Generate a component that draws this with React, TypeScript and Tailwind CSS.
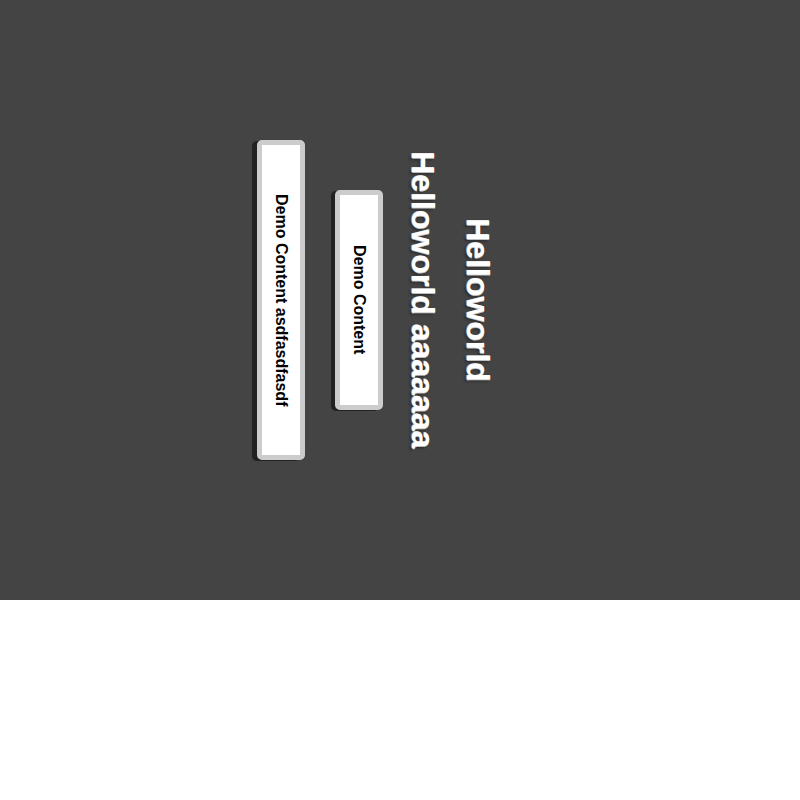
export default function App() {
  // 縦書きのカードと見出し
  return (
    <div className="w-full h-[800px] bg-white font-['Liberation_Sans',Arial,sans-serif]">
      <div className="w-full h-[600px] bg-[#444444] flex items-center pl-[257px]">
        {/* Card 1 */}
        <div className="[writing-mode:vertical-rl] w-[48px] border-[5px] border-[#cccccc] rounded-[5px] bg-white shadow-[-5px_1px_0_#222222] pt-[49px] pb-[49px] flex items-center justify-center">
          <span className="text-[16px] font-bold leading-[18px] text-black whitespace-nowrap">Demo Content asdfasdfasdf</span>
        </div>
        {/* Card 2 */}
        <div className="[writing-mode:vertical-rl] ml-[30px] w-[48px] border-[5px] border-[#cccccc] rounded-[5px] bg-white shadow-[-4px_1px_0_#222222] pt-[50px] pb-[50px] flex items-center justify-center">
          <span className="text-[16px] font-bold leading-[18px] text-black whitespace-nowrap">Demo Content</span>
        </div>
        {/* Headings */}
        <h2 className="[writing-mode:vertical-rl] ml-[21px] w-[37px] text-[32px] leading-[37px] font-bold text-white whitespace-nowrap [text-shadow:1px_0_0_rgba(255,255,255,0.7),0_1px_0_rgba(255,255,255,0.5),2px_2px_3px_rgba(0,0,0,0.4)]">
          Helloworld aaaaaaa
        </h2>
        <h1 className="[writing-mode:vertical-rl] ml-[18px] w-[37px] text-[32px] leading-[37px] font-bold text-white whitespace-nowrap [text-shadow:1px_0_0_rgba(255,255,255,0.7),0_1px_0_rgba(255,255,255,0.5),2px_2px_3px_rgba(0,0,0,0.4)]">
          Helloworld
        </h1>
      </div>
    </div>
  )
}
